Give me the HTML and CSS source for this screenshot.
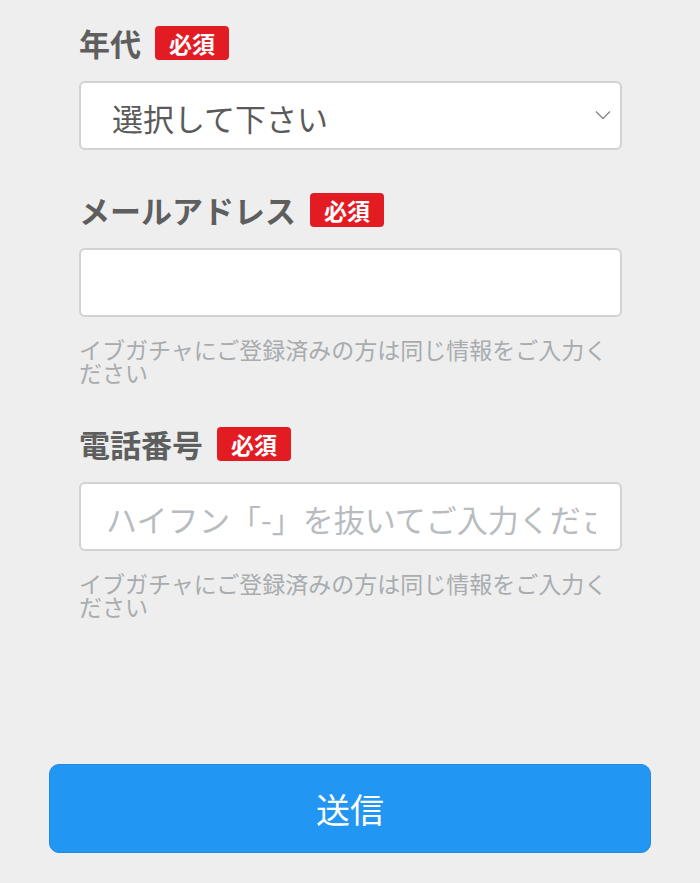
FILE: index.html
```html
<!DOCTYPE html>
<html lang="ja">
<head>
<meta charset="utf-8">
<title>フォーム</title>
<link rel="stylesheet" href="styles.css">
</head>
<body>
<form class="form">
  <div class="fields">
    <div class="field">
      <div class="label-row">
        <span class="label">年代</span>
        <span class="badge">必須</span>
      </div>
      <div class="select">
        <span class="select-text">選択して下さい</span>
        <svg class="chevron" width="16" height="10" viewBox="0 0 16 10"><polyline points="1,1.5 8,8.5 15,1.5" fill="none" stroke="#8a8a8a" stroke-width="1.4"/></svg>
      </div>
    </div>
    <div class="field">
      <div class="label-row">
        <span class="label">メールアドレス</span>
        <span class="badge">必須</span>
      </div>
      <input class="input" type="email">
      <p class="hint">イブガチャにご登録済みの方は同じ情報をご入力ください</p>
    </div>
    <div class="field">
      <div class="label-row">
        <span class="label">電話番号</span>
        <span class="badge">必須</span>
      </div>
      <input class="input" type="tel" placeholder="ハイフン「-」を抜いてご入力ください">
      <p class="hint">イブガチャにご登録済みの方は同じ情報をご入力ください</p>
    </div>
  </div>
  <div class="actions">
    <button class="submit" type="button">送信</button>
  </div>
</form>
</body>
</html>
```

FILE: styles.css
```css
* { box-sizing: border-box; }
html, body {
  margin: 0;
  padding: 0;
  background: #eeeeee;
}
body {
  font-family: "Noto Sans CJK JP", "Noto Sans", sans-serif;
  color: #555;
}
.form {
  margin: 0;
  padding-top: 26px;
}
.fields {
  padding: 0 78px 0 79px;
  display: flex;
  flex-direction: column;
  gap: 43px;
}
.field {
  display: flex;
  flex-direction: column;
}
.label-row {
  display: flex;
  align-items: center;
  gap: 14px;
  height: 34px;
  margin-bottom: 21px;
}
.label {
  font-size: 31px;
  font-weight: 700;
  color: #5e5e5e;
  line-height: 34px;
}
.badge {
  background: #e31c24;
  color: #fff;
  font-size: 23px;
  font-weight: 700;
  line-height: 34px;
  height: 34px;
  padding: 0 14px;
  border-radius: 4px;
}
.select {
  height: 69px;
  background: #fff;
  border: 2px solid #d2d2d2;
  border-radius: 6px;
  display: flex;
  align-items: center;
  justify-content: space-between;
  padding: 0 9px 0 31px;
}
.select-text {
  font-size: 31px;
  color: #5a5a5a;
  line-height: 1;
  padding-top: 3px;
}
.chevron { margin-bottom: 2px; }
.input {
  display: block;
  width: 100%;
  height: 69px;
  margin: 0;
  background: #fff;
  border: 2px solid #d2d2d2;
  border-radius: 6px;
  padding: 3px 24px 0 25px;
  font-family: inherit;
  font-size: 31px;
  color: #555;
  outline: none;
}
.input::placeholder {
  color: #b8bcbf;
  opacity: 1;
}
.hint {
  margin: 21px 0 0;
  font-size: 23px;
  line-height: 23px;
  color: #a8acaf;
}
.actions {
  padding: 0 49px;
  margin-top: 146px;
}
.submit {
  display: block;
  width: 100%;
  height: 89px;
  background: #2196f3;
  border: 1px solid #1e8ae6;
  border-radius: 10px;
  color: #fff;
  font-family: inherit;
  font-size: 34px;
  font-weight: 400;
  padding: 0;
}
```
